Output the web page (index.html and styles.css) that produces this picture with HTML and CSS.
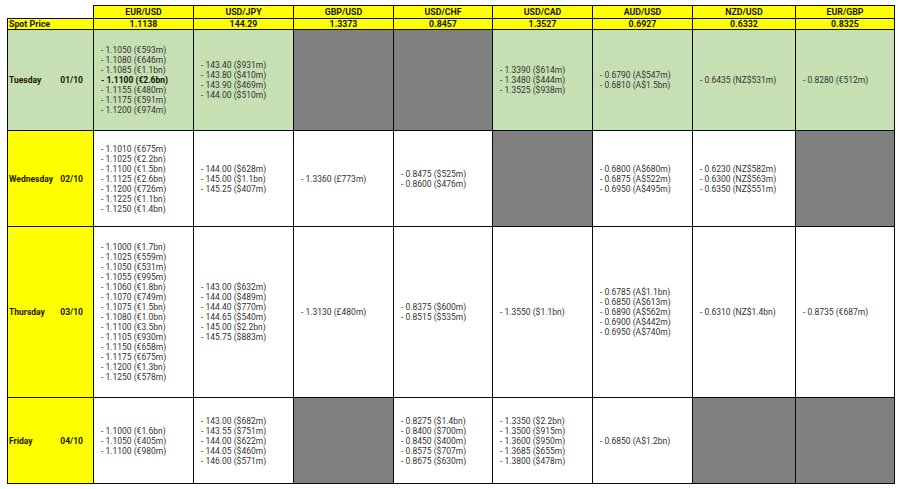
FILE: index.html
```html
<!DOCTYPE html>
<html>
<head>
<meta charset="utf-8">
<link rel="stylesheet" href="styles.css">
</head>
<body>
<table class="grid">
  <colgroup>
    <col class="c-label"><col class="c-100"><col class="c-100"><col class="c-100"><col class="c-99"><col class="c-100"><col class="c-100"><col class="c-103"><col class="c-99">
  </colgroup>
  <tr class="r-head">
    <td class="blank"></td>
    <th>EUR/USD</th><th>USD/JPY</th><th>GBP/USD</th><th>USD/CHF</th><th>USD/CAD</th><th>AUD/USD</th><th>NZD/USD</th><th>EUR/GBP</th>
  </tr>
  <tr class="r-spot">
    <th class="spot-label">Spot Price</th>
    <th>1.1138</th><th>144.29</th><th>1.3373</th><th>0.8457</th><th>1.3527</th><th>0.6927</th><th>0.6332</th><th>0.8325</th>
  </tr>
  <tr class="r-tue">
    <td class="day green"><div class="day-in"><span>Tuesday</span><span>01/10</span></div></td>
    <td class="green">- 1.1050 (€593m)<br>- 1.1080 (€646m)<br>- 1.1085 (€1.1bn)<br><b>- 1.1100 (€2.6bn)</b><br>- 1.1155 (€480m)<br>- 1.1175 (€591m)<br>- 1.1200 (€974m)</td>
    <td class="green">- 143.40 ($931m)<br>- 143.80 ($410m)<br>- 143.90 ($469m)<br>- 144.00 ($510m)</td>
    <td class="gray"></td>
    <td class="gray"></td>
    <td class="green">- 1.3390 ($614m)<br>- 1.3480 ($444m)<br>- 1.3525 ($938m)</td>
    <td class="green">- 0.6790 (A$547m)<br>- 0.6810 (A$1.5bn)</td>
    <td class="green">- 0.6435 (NZ$531m)</td>
    <td class="green">- 0.8280 (€512m)</td>
  </tr>
  <tr class="r-wed">
    <td class="day yellow"><div class="day-in"><span>Wednesday</span><span>02/10</span></div></td>
    <td>- 1.1010 (€675m)<br>- 1.1025 (€2.2bn)<br>- 1.1100 (€1.5bn)<br>- 1.1125 (€2.6bn)<br>- 1.1200 (€726m)<br>- 1.1225 (€1.1bn)<br>- 1.1250 (€1.4bn)</td>
    <td>- 144.00 ($628m)<br>- 145.00 ($1.1bn)<br>- 145.25 ($407m)</td>
    <td>- 1.3360 (£773m)</td>
    <td>- 0.8475 ($525m)<br>- 0.8600 ($476m)</td>
    <td class="gray"></td>
    <td>- 0.6800 (A$680m)<br>- 0.6875 (A$522m)<br>- 0.6950 (A$495m)</td>
    <td>- 0.6230 (NZ$582m)<br>- 0.6300 (NZ$563m)<br>- 0.6350 (NZ$551m)</td>
    <td class="gray"></td>
  </tr>
  <tr class="r-thu">
    <td class="day yellow"><div class="day-in"><span>Thursday</span><span>03/10</span></div></td>
    <td>- 1.1000 (€1.7bn)<br>- 1.1025 (€559m)<br>- 1.1050 (€531m)<br>- 1.1055 (€995m)<br>- 1.1060 (€1.8bn)<br>- 1.1070 (€749m)<br>- 1.1075 (€1.5bn)<br>- 1.1080 (€1.0bn)<br>- 1.1100 (€3.5bn)<br>- 1.1105 (€930m)<br>- 1.1150 (€658m)<br>- 1.1175 (€675m)<br>- 1.1200 (€1.3bn)<br>- 1.1250 (€578m)</td>
    <td>- 143.00 ($632m)<br>- 144.00 ($489m)<br>- 144.40 ($770m)<br>- 144.65 ($540m)<br>- 145.00 ($2.2bn)<br>- 145.75 ($883m)</td>
    <td>- 1.3130 (£480m)</td>
    <td>- 0.8375 ($600m)<br>- 0.8515 ($535m)</td>
    <td>- 1.3550 ($1.1bn)</td>
    <td>- 0.6785 (A$1.1bn)<br>- 0.6850 (A$613m)<br>- 0.6890 (A$562m)<br>- 0.6900 (A$442m)<br>- 0.6950 (A$740m)</td>
    <td>- 0.6310 (NZ$1.4bn)</td>
    <td>- 0.8735 (€687m)</td>
  </tr>
  <tr class="r-fri">
    <td class="day yellow"><div class="day-in"><span>Friday</span><span>04/10</span></div></td>
    <td>- 1.1000 (€1.6bn)<br>- 1.1050 (€405m)<br>- 1.1100 (€980m)</td>
    <td>- 143.00 ($682m)<br>- 143.55 ($751m)<br>- 144.00 ($622m)<br>- 144.05 ($460m)<br>- 146.00 ($571m)</td>
    <td class="gray"></td>
    <td>- 0.8275 ($1.4bn)<br>- 0.8400 ($700m)<br>- 0.8450 ($400m)<br>- 0.8575 ($707m)<br>- 0.8675 ($630m)</td>
    <td>- 1.3350 ($2.2bn)<br>- 1.3500 ($915m)<br>- 1.3600 ($950m)<br>- 1.3685 ($655m)<br>- 1.3800 ($478m)</td>
    <td>- 0.6850 (A$1.2bn)</td>
    <td class="gray"></td>
    <td class="gray"></td>
  </tr>
</table>
</body>
</html>
```

FILE: styles.css
```css
html, body {
  margin: 0;
  background: #ffffff;
}
body {
  padding: 5px 0 0 7px;
  font-family: Roboto, "Liberation Sans", sans-serif;
}
.grid {
  border-collapse: collapse;
  table-layout: fixed;
  width: 887px;
}
.c-label { width: 86px; }
.c-100 { width: 100px; }
.c-99 { width: 99px; }
.c-103 { width: 103px; }

.grid th, .grid td {
  border: 1px solid #0a0a0a;
  padding: 0;
  overflow: hidden;
  white-space: nowrap;
}
.grid td.blank {
  border: none;
  background: transparent;
}
.grid th {
  background: #ffff00;
  color: #1a1a00;
  font-weight: 700;
  font-size: 8.8px;
  line-height: 10px;
  text-align: center;
}
.grid th.spot-label {
  text-align: left;
  padding-left: 1px;
}
.r-head { height: 13px; }
.r-spot { height: 11px; }
.r-tue { height: 101px; }
.r-wed { height: 96px; }
.r-thu { height: 171px; }
.r-fri { height: 86px; }

.grid td {
  font-size: 8.5px;
  line-height: 10px;
  color: #333333;
  vertical-align: middle;
  text-align: left;
  padding-left: 7px;
}
.grid td b {
  color: #111;
  font-weight: 700;
}
.grid td.day {
  padding: 0 10px 0 1px;
  font-weight: 700;
  font-size: 8.5px;
  color: #1a1a00;
}
.day-in {
  display: flex;
  justify-content: space-between;
}
.green { background: #c6e0b4; }
.yellow { background: #ffff00; }
.gray { background: #808080; }
```
